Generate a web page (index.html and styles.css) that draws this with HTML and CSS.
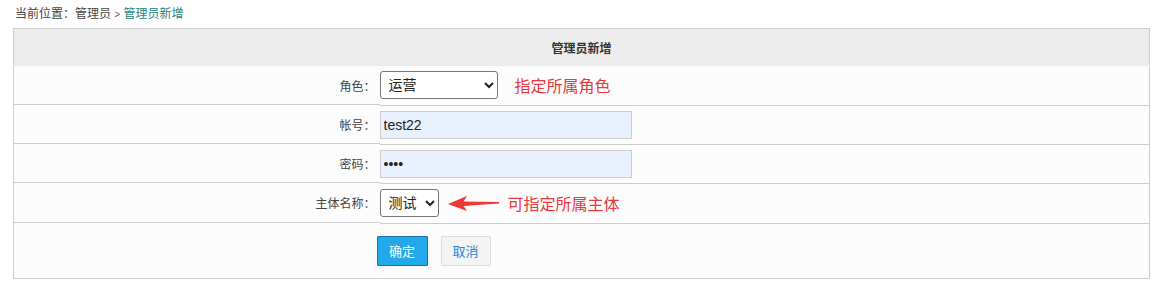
FILE: index.html
```
<!DOCTYPE html>
<html lang="zh">
<head>
    <meta charset="UTF-8">
    <title>管理员新增</title>
    <link rel="stylesheet" href="styles.css">
</head>
<body>
    <div class="crumb">当前位置：管理员 <span class="sep">&gt;</span> <span class="here">管理员新增</span></div>

    <table class="form-table">
        <colgroup>
            <col class="col-label">
            <col>
        </colgroup>
        <tr class="head">
            <th colspan="2">管理员新增</th>
        </tr>
        <tr class="row-1">
            <td class="label">角色：</td>
            <td class="field">
                <select class="sel-role">
                    <option>运营</option>
                </select>
                <span class="note">指定所属角色</span>
            </td>
        </tr>
        <tr>
            <td class="label">帐号：</td>
            <td class="field"><input class="txt" type="text" value="test22"></td>
        </tr>
        <tr>
            <td class="label">密码：</td>
            <td class="field"><input class="txt" type="password" value="1234"></td>
        </tr>
        <tr class="row-4">
            <td class="label">主体名称：</td>
            <td class="field">
                <select class="sel-org">
                    <option>测试</option>
                </select>
                <svg class="arrow" width="52" height="18" viewBox="0 0 52 18">
                    <path d="M0 10 L19 2 L15.5 7.5 L51 8 L51 9.5 L15.5 12 L19 17 Z" fill="#ef3535"/>
                </svg>
                <span class="note">可指定所属主体</span>
            </td>
        </tr>
        <tr class="actions">
            <td></td>
            <td class="field">
                <button class="btn btn-ok">确定</button>
                <button class="btn btn-cancel">取消</button>
            </td>
        </tr>
    </table>
</body>
</html>
```

FILE: styles.css
```
body {
    margin: 0;
    padding: 0;
    background: #fff;
    font-family: "Liberation Sans", "Noto Sans CJK SC", sans-serif;
    font-size: 12px;
    color: #333;
}

.crumb {
    height: 28px;
    line-height: 28px;
    padding-left: 15px;
    color: #444;
}

.crumb .sep {
    font-size: 10px;
    color: #666;
}

.crumb .here {
    color: #1a8884;
}

.form-table {
    margin-left: 13px;
    width: 1137px;
    table-layout: fixed;
    border-collapse: collapse;
    border: 1px solid #ccc;
    background: #fcfcfc;
}

.col-label {
    width: 366px;
}

.form-table th {
    height: 36px;
    padding: 0;
    background: #ececec;
    color: #333;
    font-weight: bold;
    font-size: 12px;
    text-align: center;
    border-bottom: 1px solid #ececec;
}

.form-table td {
    height: 38px;
    padding: 0;
    border-top: 1px solid #ccc;
    vertical-align: middle;
}

.form-table tr.head + tr td {
    border-top: none;
    height: 38px;
}

.form-table tr.row-4 td {
    height: 39px;
}

.form-table tr.actions td {
    height: 54px;
}

.label {
    text-align: right;
    padding-right: 4px !important;
    color: #444;
}

.field {
    display: flex;
    align-items: center;
}

select {
    box-sizing: border-box;
    height: 28px;
    font-family: "Liberation Sans", "Noto Sans CJK SC", sans-serif;
    font-size: 14px;
    color: #222;
    border: 1px solid #767676;
    border-radius: 3px;
    background: #fff;
    padding: 0 4px;
}

.sel-role {
    width: 118px;
}

.sel-org {
    width: 59px;
}

.note {
    color: #e5393d;
    font-size: 16px;
}

.sel-role + .note {
    margin-left: 17px;
}

.arrow {
    margin-left: 9px;
    margin-right: 8px;
}

.txt {
    box-sizing: border-box;
    width: 252px;
    height: 28px;
    padding: 0 3px;
    font-family: "Liberation Sans", sans-serif;
    font-size: 14px;
    color: #222;
    background: #e8f0fe;
    border: 1px solid #ccc;
    outline: none;
}

.btn {
    box-sizing: border-box;
    height: 30px;
    width: 51px;
    font-family: "Noto Sans CJK SC", sans-serif;
    font-size: 13px;
    border-radius: 1px;
    cursor: pointer;
    padding: 0;
}

.btn-ok {
    margin-left: -3px;
    background: #22a9ea;
    border: 1px solid #1a73a8;
    color: #fff;
}

.btn-cancel {
    margin-left: 13px;
    width: 50px;
    background: #f4f4f4;
    border: 1px solid #ddd;
    color: #2b85d6;
}
```
